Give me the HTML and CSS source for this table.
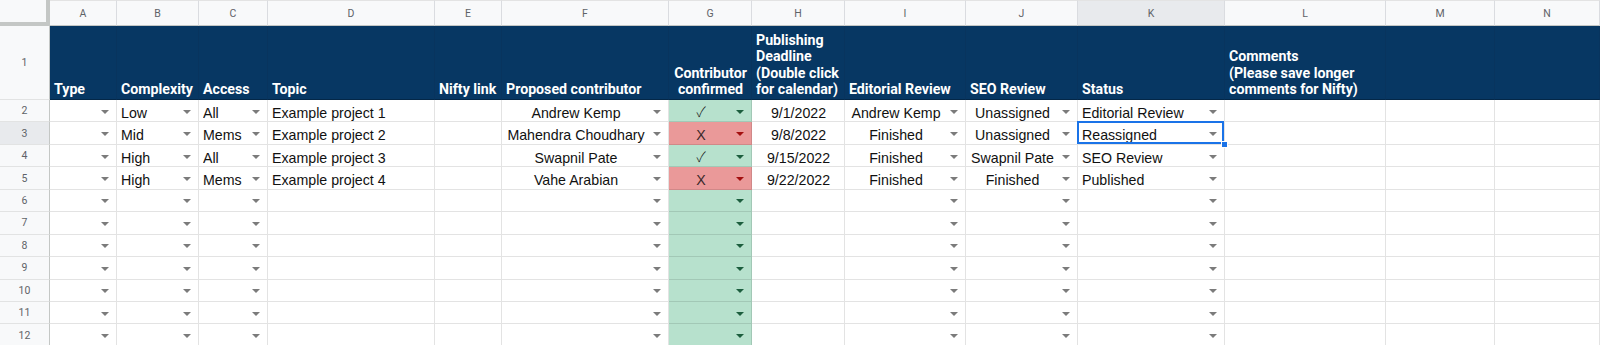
FILE: index.html
```html
<!DOCTYPE html>
<html lang="en">
<head>
<meta charset="utf-8">
<title>Editorial tracker</title>
<link rel="stylesheet" href="styles.css">
</head>
<body>
<div class="sheet">
  <!-- column headers -->
  <div class="corner"></div>
  <div class="c ch">A</div><div class="c ch">B</div><div class="c ch">C</div><div class="c ch">D</div>
  <div class="c ch">E</div><div class="c ch">F</div><div class="c ch">G</div><div class="c ch">H</div>
  <div class="c ch">I</div><div class="c ch">J</div><div class="c ch act">K</div><div class="c ch">L</div>
  <div class="c ch">M</div><div class="c ch">N</div>

  <!-- row 1 -->
  <div class="c rh">1</div>
  <div class="c h"><span>Type</span></div>
  <div class="c h"><span>Complexity</span></div>
  <div class="c h"><span>Access</span></div>
  <div class="c h"><span>Topic</span></div>
  <div class="c h"><span>Nifty link</span></div>
  <div class="c h"><span>Proposed contributor</span></div>
  <div class="c h hc"><span>Contributor<br>confirmed</span></div>
  <div class="c h"><span>Publishing<br>Deadline<br>(Double click<br>for calendar)</span></div>
  <div class="c h"><span>Editorial Review</span></div>
  <div class="c h"><span>SEO Review</span></div>
  <div class="c h"><span>Status</span></div>
  <div class="c h"><span>Comments<br>(Please save longer<br>comments for Nifty)</span></div>
  <div class="c h"></div>
  <div class="c h"></div>

  <!-- row 2 -->
  <div class="c rh">2</div>
  <div class="c dd"><span class="t"></span><i class="arr"></i></div>
  <div class="c dd"><span class="t">Low</span><i class="arr"></i></div>
  <div class="c dd"><span class="t">All</span><i class="arr"></i></div>
  <div class="c"><span class="t">Example project 1</span></div>
  <div class="c"><span class="t"></span></div>
  <div class="c dd ctr"><span class="t">Andrew Kemp</span><i class="arr"></i></div>
  <div class="c dd ctr g"><span class="t sym">✓</span><i class="arr"></i></div>
  <div class="c ctr"><span class="t">9/1/2022</span></div>
  <div class="c dd ctr"><span class="t">Andrew Kemp</span><i class="arr"></i></div>
  <div class="c dd ctr"><span class="t">Unassigned</span><i class="arr"></i></div>
  <div class="c dd"><span class="t">Editorial Review</span><i class="arr"></i></div>
  <div class="c"></div><div class="c"></div><div class="c"></div>

  <!-- row 3 -->
  <div class="c rh act">3</div>
  <div class="c dd"><span class="t"></span><i class="arr"></i></div>
  <div class="c dd"><span class="t">Mid</span><i class="arr"></i></div>
  <div class="c dd"><span class="t">Mems</span><i class="arr"></i></div>
  <div class="c"><span class="t">Example project 2</span></div>
  <div class="c"><span class="t"></span></div>
  <div class="c dd ctr"><span class="t">Mahendra Choudhary</span><i class="arr"></i></div>
  <div class="c dd ctr r"><span class="t xm">X</span><i class="arr"></i></div>
  <div class="c ctr"><span class="t">9/8/2022</span></div>
  <div class="c dd ctr"><span class="t">Finished</span><i class="arr"></i></div>
  <div class="c dd ctr"><span class="t">Unassigned</span><i class="arr"></i></div>
  <div class="c dd sel"><span class="t">Reassigned</span><i class="arr"></i></div>
  <div class="c"></div><div class="c"></div><div class="c"></div>

  <!-- row 4 -->
  <div class="c rh">4</div>
  <div class="c dd"><span class="t"></span><i class="arr"></i></div>
  <div class="c dd"><span class="t">High</span><i class="arr"></i></div>
  <div class="c dd"><span class="t">All</span><i class="arr"></i></div>
  <div class="c"><span class="t">Example project 3</span></div>
  <div class="c"><span class="t"></span></div>
  <div class="c dd ctr"><span class="t">Swapnil Pate</span><i class="arr"></i></div>
  <div class="c dd ctr g"><span class="t sym">✓</span><i class="arr"></i></div>
  <div class="c ctr"><span class="t">9/15/2022</span></div>
  <div class="c dd ctr"><span class="t">Finished</span><i class="arr"></i></div>
  <div class="c dd ctr"><span class="t">Swapnil Pate</span><i class="arr"></i></div>
  <div class="c dd"><span class="t">SEO Review</span><i class="arr"></i></div>
  <div class="c"></div><div class="c"></div><div class="c"></div>

  <!-- row 5 -->
  <div class="c rh">5</div>
  <div class="c dd"><span class="t"></span><i class="arr"></i></div>
  <div class="c dd"><span class="t">High</span><i class="arr"></i></div>
  <div class="c dd"><span class="t">Mems</span><i class="arr"></i></div>
  <div class="c"><span class="t">Example project 4</span></div>
  <div class="c"><span class="t"></span></div>
  <div class="c dd ctr"><span class="t">Vahe Arabian</span><i class="arr"></i></div>
  <div class="c dd ctr r"><span class="t xm">X</span><i class="arr"></i></div>
  <div class="c ctr"><span class="t">9/22/2022</span></div>
  <div class="c dd ctr"><span class="t">Finished</span><i class="arr"></i></div>
  <div class="c dd ctr"><span class="t">Finished</span><i class="arr"></i></div>
  <div class="c dd"><span class="t">Published</span><i class="arr"></i></div>
  <div class="c"></div><div class="c"></div><div class="c"></div>

  <!-- rows 6-12 -->
  <div class="c rh">6</div>
  <div class="c dd"><span class="t"></span><i class="arr"></i></div><div class="c dd"><span class="t"></span><i class="arr"></i></div><div class="c dd"><span class="t"></span><i class="arr"></i></div>
  <div class="c"></div><div class="c"></div>
  <div class="c dd"><span class="t"></span><i class="arr"></i></div><div class="c dd g"><span class="t"></span><i class="arr"></i></div>
  <div class="c"></div>
  <div class="c dd"><span class="t"></span><i class="arr"></i></div><div class="c dd"><span class="t"></span><i class="arr"></i></div><div class="c dd"><span class="t"></span><i class="arr"></i></div>
  <div class="c"></div><div class="c"></div><div class="c"></div>

  <div class="c rh">7</div>
  <div class="c dd"><span class="t"></span><i class="arr"></i></div><div class="c dd"><span class="t"></span><i class="arr"></i></div><div class="c dd"><span class="t"></span><i class="arr"></i></div>
  <div class="c"></div><div class="c"></div>
  <div class="c dd"><span class="t"></span><i class="arr"></i></div><div class="c dd g"><span class="t"></span><i class="arr"></i></div>
  <div class="c"></div>
  <div class="c dd"><span class="t"></span><i class="arr"></i></div><div class="c dd"><span class="t"></span><i class="arr"></i></div><div class="c dd"><span class="t"></span><i class="arr"></i></div>
  <div class="c"></div><div class="c"></div><div class="c"></div>

  <div class="c rh">8</div>
  <div class="c dd"><span class="t"></span><i class="arr"></i></div><div class="c dd"><span class="t"></span><i class="arr"></i></div><div class="c dd"><span class="t"></span><i class="arr"></i></div>
  <div class="c"></div><div class="c"></div>
  <div class="c dd"><span class="t"></span><i class="arr"></i></div><div class="c dd g"><span class="t"></span><i class="arr"></i></div>
  <div class="c"></div>
  <div class="c dd"><span class="t"></span><i class="arr"></i></div><div class="c dd"><span class="t"></span><i class="arr"></i></div><div class="c dd"><span class="t"></span><i class="arr"></i></div>
  <div class="c"></div><div class="c"></div><div class="c"></div>

  <div class="c rh">9</div>
  <div class="c dd"><span class="t"></span><i class="arr"></i></div><div class="c dd"><span class="t"></span><i class="arr"></i></div><div class="c dd"><span class="t"></span><i class="arr"></i></div>
  <div class="c"></div><div class="c"></div>
  <div class="c dd"><span class="t"></span><i class="arr"></i></div><div class="c dd g"><span class="t"></span><i class="arr"></i></div>
  <div class="c"></div>
  <div class="c dd"><span class="t"></span><i class="arr"></i></div><div class="c dd"><span class="t"></span><i class="arr"></i></div><div class="c dd"><span class="t"></span><i class="arr"></i></div>
  <div class="c"></div><div class="c"></div><div class="c"></div>

  <div class="c rh">10</div>
  <div class="c dd"><span class="t"></span><i class="arr"></i></div><div class="c dd"><span class="t"></span><i class="arr"></i></div><div class="c dd"><span class="t"></span><i class="arr"></i></div>
  <div class="c"></div><div class="c"></div>
  <div class="c dd"><span class="t"></span><i class="arr"></i></div><div class="c dd g"><span class="t"></span><i class="arr"></i></div>
  <div class="c"></div>
  <div class="c dd"><span class="t"></span><i class="arr"></i></div><div class="c dd"><span class="t"></span><i class="arr"></i></div><div class="c dd"><span class="t"></span><i class="arr"></i></div>
  <div class="c"></div><div class="c"></div><div class="c"></div>

  <div class="c rh">11</div>
  <div class="c dd"><span class="t"></span><i class="arr"></i></div><div class="c dd"><span class="t"></span><i class="arr"></i></div><div class="c dd"><span class="t"></span><i class="arr"></i></div>
  <div class="c"></div><div class="c"></div>
  <div class="c dd"><span class="t"></span><i class="arr"></i></div><div class="c dd g"><span class="t"></span><i class="arr"></i></div>
  <div class="c"></div>
  <div class="c dd"><span class="t"></span><i class="arr"></i></div><div class="c dd"><span class="t"></span><i class="arr"></i></div><div class="c dd"><span class="t"></span><i class="arr"></i></div>
  <div class="c"></div><div class="c"></div><div class="c"></div>

  <div class="c rh">12</div>
  <div class="c dd"><span class="t"></span><i class="arr"></i></div><div class="c dd"><span class="t"></span><i class="arr"></i></div><div class="c dd"><span class="t"></span><i class="arr"></i></div>
  <div class="c"></div><div class="c"></div>
  <div class="c dd"><span class="t"></span><i class="arr"></i></div><div class="c dd g"><span class="t"></span><i class="arr"></i></div>
  <div class="c"></div>
  <div class="c dd"><span class="t"></span><i class="arr"></i></div><div class="c dd"><span class="t"></span><i class="arr"></i></div><div class="c dd"><span class="t"></span><i class="arr"></i></div>
  <div class="c"></div><div class="c"></div><div class="c"></div>
</div>
</body>
</html>
```

FILE: styles.css
```css
html, body {
  margin: 0;
  padding: 0;
  background: #fff;
  overflow: hidden;
}

.sheet {
  display: grid;
  grid-template-columns: 50px 67px 82px 69px 167px 67px 167px 83px 93px 121px 112px 147px 161px 109px 105px;
  grid-template-rows: 26px 74px repeat(11, 22.44px);
  font-family: "Liberation Sans", Arial, sans-serif;
  font-size: 14.2px;
  color: #111;
}

.c {
  box-sizing: border-box;
  min-width: 0;
  display: flex;
  align-items: center;
  padding: 4px 3px 0 4px;
  border-right: 1px solid rgba(0, 0, 0, 0.11);
  border-bottom: 1px solid rgba(0, 0, 0, 0.11);
  white-space: nowrap;
  overflow: hidden;
}

.c.dd {
  padding-right: 7px;
}

.t {
  flex: 1;
  min-width: 0;
  overflow: hidden;
}

.ctr .t {
  text-align: center;
}

.t.sym {
  overflow: visible;
  font-family: "Noto Sans CJK JP", "DejaVu Sans", sans-serif;
  font-size: 14px;
  font-weight: 300;
  line-height: 18px;
  margin-top: -3px;
}

.xm {
  color: #3a2a2a;
}

.arr {
  flex: none;
  width: 0;
  height: 0;
  margin-left: 7px;
  margin-top: -2px;
  border-left: 4px solid transparent;
  border-right: 4px solid transparent;
  border-top: 4px solid #7b7b7b;
}

.g {
  background: #b7e1cd;
}

.g .arr {
  border-top-color: #1c5e3e;
}

.r {
  background: #ea9999;
}

.r .arr {
  border-top-color: #a30f0f;
}

/* headers */
.corner {
  box-sizing: border-box;
  background: #f8f9fa;
  border-right: 4px solid #c4c7c5;
  border-bottom: 4px solid #c4c7c5;
}

.ch {
  justify-content: center;
  padding: 0;
  background: #f8f9fa;
  color: #5f6368;
  font-family: Roboto, sans-serif;
  font-size: 10.5px;
  border-right: 1px solid #dadce0;
  border-bottom: 1px solid #c4c7c5;
  border-top: 1px solid #e3e3e3;
}

.rh {
  justify-content: center;
  padding: 0;
  background: #f8f9fa;
  color: #5f6368;
  font-family: Roboto, sans-serif;
  font-size: 10.5px;
  border-right: 1px solid #c4c7c5;
  border-bottom: 1px solid #e2e3e3;
}

.act {
  background: #e8eaed;
}

.h {
  align-items: flex-end;
  padding: 0 3px 1px 4px;
  background: #073763;
  color: #fff;
  font-family: Roboto, "Liberation Sans", sans-serif;
  font-weight: 700;
  font-size: 14.2px;
  line-height: 16.6px;
  border-right: 1px solid #08345e;
  border-bottom: 1px solid #042747;
}

.h.hc {
  justify-content: center;
  text-align: center;
}

/* active cell selection */
.sel {
  position: relative;
  z-index: 2;
  overflow: visible;
}

.sel::before {
  content: "";
  position: absolute;
  left: -1px;
  top: -1px;
  right: 0;
  bottom: 0;
  border: 2px solid #1a73e8;
}

.sel::after {
  content: "";
  position: absolute;
  right: -4px;
  bottom: -4px;
  width: 5px;
  height: 5px;
  background: #1a73e8;
  border: 1px solid #fff;
}
```
